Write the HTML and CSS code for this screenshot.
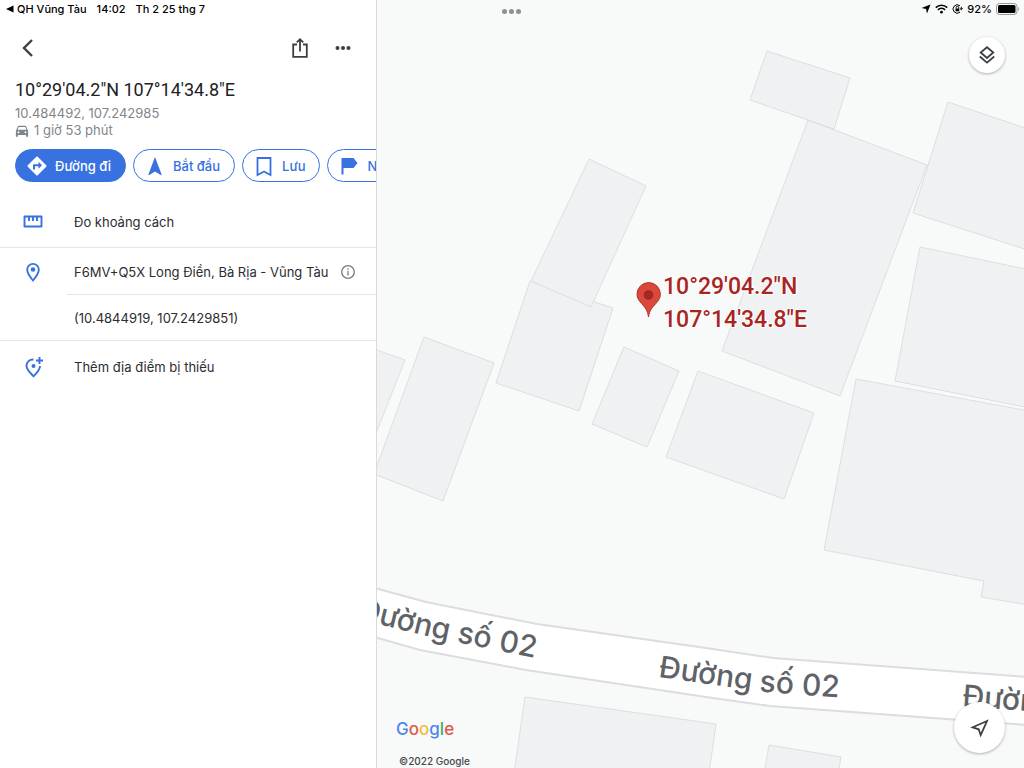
FILE: index.html
```html
<!DOCTYPE html>
<html lang="vi">
<head>
  <meta charset="UTF-8">
  <meta name="viewport" content="width=device-width, initial-scale=1.0">
  <title>10°29'04.2"N 107°14'34.8"E</title>
  <link rel="stylesheet" href="styles.css">
</head>
<body>
  <div class="app">
    <aside class="panel">
      <div class="status">
        <a class="status-back" href="#"><svg width="8" height="8" viewBox="0 0 8 8"><path d="M7.500 .5v7L0 4z"/></svg>QH Vũng Tàu</a>
        <span>14:02</span>
        <span>Th 2 25 thg 7</span>
      </div>

      <div class="toolbar">
        <button class="icon-btn" aria-label="Quay lại">
          <svg width="24" height="24" viewBox="0 0 24 24" class="line"><path d="M16 4 8 12l8 8"/></svg>
        </button>
        <button class="icon-btn push" aria-label="Chia sẻ">
          <svg width="24" height="24" viewBox="0 0 24 24" class="line thin"><path d="M9 8.500H5.200v12.300h13.600V8.500H15M12 15.500V3.500M8.800 6.400 12 3.200l3.200 3.200"/></svg>
        </button>
        <button class="icon-btn" aria-label="Thêm">
          <svg width="24" height="24" viewBox="0 0 24 24"><circle cx="6.500" cy="12" r="2"/><circle cx="12" cy="12" r="2"/><circle cx="17.500" cy="12" r="2"/></svg>
        </button>
      </div>

      <div class="place">
        <h1>10°29'04.2"N 107°14'34.8"E</h1>
        <p>10.484492, 107.242985</p>
        <p class="drive">
          <svg width="14" height="14" viewBox="0 0 24 24"><path fill-rule="evenodd" d="M19.500 4.500C19.300 3.600 18.400 3 17.500 3h-11c-1 0-1.700.6-2 1.500L1.500 12v9c0 .6.400 1 1 1h1.500c.6 0 1-.4 1-1v-2h14v2c0 .6.400 1 1 1h1.500c.6 0 1-.4 1-1v-9zM6 16a1.700 1.700 0 1 1 0-3.400A1.700 1.700 0 0 1 6 16zm12 0a1.700 1.700 0 1 1 0-3.400 1.700 1.700 0 0 1 0 3.400zM4.500 10 6.200 5h11.600l1.700 5z"/></svg>
          1 giờ 53 phút
        </p>
      </div>

      <div class="chips">
        <button class="chip primary">
          <svg width="24" height="24" viewBox="0 0 24 24"><path fill-rule="evenodd" d="M21.200 11.300 12.700 2.800a1 1 0 0 0-1.400 0L2.800 11.300a1 1 0 0 0 0 1.400l8.500 8.500a1 1 0 0 0 1.400 0l8.500-8.500a1 1 0 0 0 0-1.400zM13.500 14.800v-2.500H10V15.500H8V11.300a1 1 0 0 1 1-1h4.500V7.800l3.500 3.500z"/></svg>
          Đường đi
        </button>
        <button class="chip">
          <svg width="24" height="24" viewBox="0 0 24 24"><path d="M12 3 5.300 20.800l.5.500L12 17.500l6.200 3.800.5-.5z"/></svg>
          Bắt đầu
        </button>
        <button class="chip">
          <svg width="24" height="24" viewBox="0 0 24 24" class="line thin"><path d="M5.500 4h13v17L12 17.500 5.500 21z"/></svg>
          Lưu
        </button>
        <button class="chip">
          <svg width="24" height="24" viewBox="0 0 24 24"><path d="M4.500 4h12l4 5-4 5h-10v6.500h-2z"/></svg>
          Nhãn
        </button>
      </div>

      <ul class="list">
        <li class="row tall">
          <svg class="row-icon" width="24" height="24" viewBox="0 0 24 24"><path class="stroke" stroke-linejoin="round" d="M3.500 6.500h17v10h-17zM8 6.500V11M12 6.500V11M16 6.500V11"/></svg>
          <span class="row-text">Đo khoảng cách</span>
        </li>
        <li class="row inset">
          <svg class="row-icon" width="24" height="24" viewBox="0 0 24 24"><path class="stroke" d="M12 20.500c-3.500-4.300-5.800-7.400-5.800-10.800a5.800 5.800 0 0 1 11.600 0c0 3.400-2.300 6.500-5.800 10.800z"/><circle cx="12" cy="9.500" r="2.300"/></svg>
          <span class="row-text">F6MV+Q5X Long Điền, Bà Rịa - Vũng Tàu</span>
          <button class="info" aria-label="Thông tin">
            <svg width="16" height="16" viewBox="0 0 16 16"><circle cx="8" cy="8" r="6.300"/><path d="M8 7v4.500M8 4.300v1.500"/></svg>
          </button>
        </li>
        <li class="row">
          <span class="row-icon"></span>
          <span class="row-text">(10.4844919, 107.2429851)</span>
        </li>
        <li class="row last">
          <svg class="row-icon" width="24" height="24" viewBox="0 0 24 24"><path class="stroke" d="M12.500 4.500C8.500 4.200 5.500 7 5.500 10.800c0 3 2.300 6 7 10.400 4.500-4.200 6.500-7.200 6.500-10.200M18.500 2v7M15 5.500h7"/><circle cx="12.500" cy="11" r="2"/></svg>
          <span class="row-text">Thêm địa điểm bị thiếu</span>
        </li>
      </ul>
    </aside>

    <main class="map">
      <svg class="map-canvas" viewBox="377 0 647 768" preserveAspectRatio="xMidYMid slice">
        <g class="buildings">
          <path d="M808 120 927 165 840 396 722 351z"/>
          <path d="M767 51 850 78 834 129 750 100z"/>
          <path d="M948 102 1040 133V254L913 213z"/>
          <path d="M530 281 613 308 579 411 496 383z"/>
          <path d="M589 159 646 186 591 307 531 281z"/>
          <path d="M424 337 494 363 443 501 374 474z"/>
          <path d="M360 344 405 360 360 474z"/>
          <path d="M624 347 679 371 647 447 592 424z"/>
          <path d="M698 371 814 413 784 499 666 457z"/>
          <path d="M920 247 1040 272V410L895 381z"/>
          <path d="M856 379 1040 413V607L981 597 984 581 824 550z"/>
          <path d="M525 697 716 724 708 780H513z"/>
          <path d="M769 745 841 757 837 780H763z"/>
        </g>

        <path class="road" d="M360 584 426 602 537 624 706 648 773 658 1040 678V726L770 706 706 697 526 670 420 650 360 633z"/>

        <path id="street-1" fill="none" d="M357 618 382 625 431 637 560 663"/>
        <path id="street-2" fill="none" d="M658 677 765 692 900 702"/>
        <path id="street-3" fill="none" d="M962 706 1200 724"/>
        <g class="street">
          <text><textPath href="#street-1">Đường số 02</textPath></text>
          <text><textPath href="#street-2">Đường số 02</textPath></text>
          <text><textPath href="#street-3">Đường số 02</textPath></text>
        </g>

        <path class="pin" d="M648.500 317c-1-7-3.500-9.500-7-13.500-2.500-2.800-4.500-5.500-4.500-9.200a11.700 11.700 0 0 1 23.400 0c0 3.700-2 6.400-4.500 9.200-3.500 4-6.400 6.500-7.400 13.500z"/>
        <circle class="pin-dot" cx="648.500" cy="295" r="4.800"/>
        <g class="pin-label">
          <text x="663" y="294">10°29'04.2"N</text>
          <text x="663" y="327">107°14'34.8"E</text>
        </g>
      </svg>

      <div class="drag-dots"><i></i><i></i><i></i></div>

      <div class="status status-right">
        <svg width="10" height="10" viewBox="0 0 10 10"><path d="M9.500.5 6 9.500 5 5 .5 4z"/></svg>
        <svg width="13" height="10" viewBox="0 0 13 10" class="wifi"><path d="M.8 3.600a8.200 8.200 0 0 1 11.400 0M2.900 5.800a5.200 5.200 0 0 1 7.200 0"/><circle cx="6.500" cy="8.200" r="1.400"/></svg>
        <svg width="11" height="10" viewBox="0 0 11 10" class="lock"><path d="M8 1.800A4.200 4.200 0 1 0 8 8.200M9.300 2.800v2.500M7.800 4.300l1.500 1.400 1.400-1.400M4.200 4.500V3.500a1.200 1.200 0 0 1 2.400 0v1"/><path class="solid" d="M3.500 4.500h3.800v2.800H3.500z"/></svg>
        <span>92%</span>
        <svg width="24" height="12" viewBox="0 0 24 12"><rect class="cell" x=".5" y=".5" width="20.500" height="11" rx="3"/><rect x="2" y="2" width="17.500" height="8" rx="1.500"/><path class="cap" d="M22.200 4v4c1.300-.6 1.300-3.400 0-4z"/></svg>
      </div>

      <button class="fab layers" aria-label="Lớp bản đồ">
        <svg width="22" height="22" viewBox="0 0 22 22" class="line thin"><path d="M11 3.200 17.300 8.500 11 14 4.700 8.500zM3.800 12.500 11 18.600l7.200-6.100"/></svg>
      </button>
      <button class="fab locate" aria-label="Vị trí của bạn">
        <svg width="24" height="24" viewBox="0 0 24 24" class="line thin"><path d="M19 5 4.700 11.300l6 2 2 5.700z"/></svg>
      </button>

      <div class="credits">
        <div class="logo"><span class="blue">G</span><span class="red">o</span><span class="yellow">o</span><span class="blue">g</span><span class="green">l</span><span class="red">e</span></div>
        <small>©2022 Google</small>
      </div>
    </main>
  </div>
</body>
</html>
```

FILE: styles.css
```css
:root {
  --blue: #3871e0;
  --text: #2b2d30;
  --muted: #80868b;
  --line: #e4e5e7;
  --land: #f8faf9;
}

* {
  box-sizing: border-box;
}

body {
  margin: 0;
  font-family: Inter, "Liberation Sans", sans-serif;
  font-size: 13px;
  color: var(--text);
}

button {
  font: inherit;
  color: inherit;
  background: none;
  border: none;
  padding: 0;
  cursor: pointer;
}

svg {
  display: block;
  flex: none;
  fill: currentColor;
}

.line {
  fill: none;
  stroke: currentColor;
  stroke-width: 2.4;
}

.thin {
  stroke-width: 1.8;
}

.app {
  display: flex;
  min-height: 100vh;
}

.panel {
  flex: none;
  width: 377px;
  overflow: hidden;
  background: #fff;
  border-right: 1px solid #d8dadb;
}

/* status bar */
.status {
  display: flex;
  align-items: center;
  gap: 10px;
  height: 18px;
  padding-left: 6px;
  font-size: 11px;
  font-weight: 500;
  color: #000;
}

.status-back {
  display: flex;
  align-items: center;
  gap: 3px;
  color: inherit;
  text-decoration: none;
}

.status-right {
  position: absolute;
  top: 0;
  right: 4px;
  gap: 4px;
}

.wifi path,
.lock path {
  fill: none;
  stroke: #000;
  stroke-width: 1.6;
}

.lock path {
  stroke-width: 1;
}

.lock .solid {
  fill: #000;
  stroke: none;
}

.cell {
  fill: none;
  stroke: #999;
}

.cap {
  fill: #999;
}

/* place header */
.toolbar {
  display: flex;
  align-items: center;
  gap: 19px;
  height: 60px;
  padding: 0 21px 0 16px;
  color: #3c4043;
}

.push {
  margin-left: auto;
}

.place {
  padding: 0 15px;
  color: var(--muted);
}

.place h1 {
  margin: 0 0 3px;
  font-family: Roboto, Inter, sans-serif;
  font-size: 18px;
  line-height: 24px;
  font-weight: 400;
  color: #202124;
}

.place p {
  margin: 0;
  line-height: 17px;
}

.place .drive {
  display: flex;
  align-items: center;
  gap: 5px;
}

.chips {
  display: flex;
  gap: 7px;
  padding: 10px 0 0 15px;
  overflow: hidden;
}

.chip {
  display: flex;
  flex: none;
  align-items: center;
  gap: 6px;
  height: 33px;
  padding: 0 14px 0 9px;
  border: 1px solid var(--blue);
  border-radius: 17px;
  font-weight: 500;
  color: var(--blue);
}

.chip.primary {
  background: var(--blue);
  color: #fff;
}

/* list */
.list {
  margin: 14px 0 0;
  padding: 0;
  list-style: none;
}

.row {
  position: relative;
  display: flex;
  align-items: center;
  height: 46px;
  padding: 0 20px 0 21px;
  border-bottom: 1px solid var(--line);
}

.row.tall {
  height: 52px;
}

.row.inset {
  height: 47px;
  border-bottom: none;
}

.row.inset::after {
  content: "";
  position: absolute;
  left: 67px;
  right: 0;
  bottom: 0;
  height: 1px;
  background: var(--line);
}

.row.last {
  height: 52px;
  border-bottom: none;
}

.row-icon {
  width: 24px;
  margin-right: 29px;
  color: var(--blue);
}

.row-icon .stroke {
  fill: none;
  stroke: currentColor;
  stroke-width: 1.9;
}

.row-text {
  flex: 1;
  white-space: nowrap;
}

.info svg {
  fill: none;
  stroke: #777b80;
  stroke-width: 1.3;
}

/* map */
.map {
  position: relative;
  flex: 1;
  overflow: hidden;
  background: var(--land);
}

.map-canvas {
  position: absolute;
  inset: 0;
  width: 100%;
  height: 100%;
}

.buildings {
  fill: #f0f1f3;
  stroke: #dddee1;
  stroke-width: 1;
}

.road {
  fill: #fff;
  stroke: #dcdce1;
  stroke-width: 2;
}

.street {
  font-size: 30px;
  font-weight: 500;
  fill: #5f6368;
}

.pin {
  fill: #d9493b;
  stroke: #b3352a;
  stroke-width: 1;
}

.pin-dot {
  fill: #a52720;
}

.pin-label {
  font-family: Roboto, Inter, sans-serif;
  font-size: 23px;
  font-weight: 500;
  fill: #a8261f;
  stroke: #fff;
  stroke-width: 2;
  paint-order: stroke;
}

.drag-dots {
  position: absolute;
  top: 9px;
  left: 125px;
  display: flex;
  gap: 2px;
}

.drag-dots i {
  width: 5px;
  height: 5px;
  border-radius: 50%;
  background: #8e9092;
}

.fab {
  position: absolute;
  display: flex;
  align-items: center;
  justify-content: center;
  border-radius: 50%;
  background: #fff;
  box-shadow: 0 1px 3px rgba(0, 0, 0, 0.3);
  color: #3c4043;
}

.layers {
  top: 37px;
  right: 19px;
  width: 36px;
  height: 36px;
}

.locate {
  right: 19px;
  bottom: 15px;
  width: 51px;
  height: 51px;
}

.credits {
  position: absolute;
  left: 19px;
  bottom: 0;
}

.logo {
  font-size: 17px;
  line-height: 22px;
  font-weight: 500;
}

.credits small {
  display: block;
  margin: 15px 0 0 3px;
  font-size: 10px;
  line-height: 13px;
  font-weight: 500;
  color: #45484b;
}

.blue { color: #4c86ee; }
.red { color: #e2574c; }
.yellow { color: #f3bd42; }
.green { color: #4fa765; }
```
